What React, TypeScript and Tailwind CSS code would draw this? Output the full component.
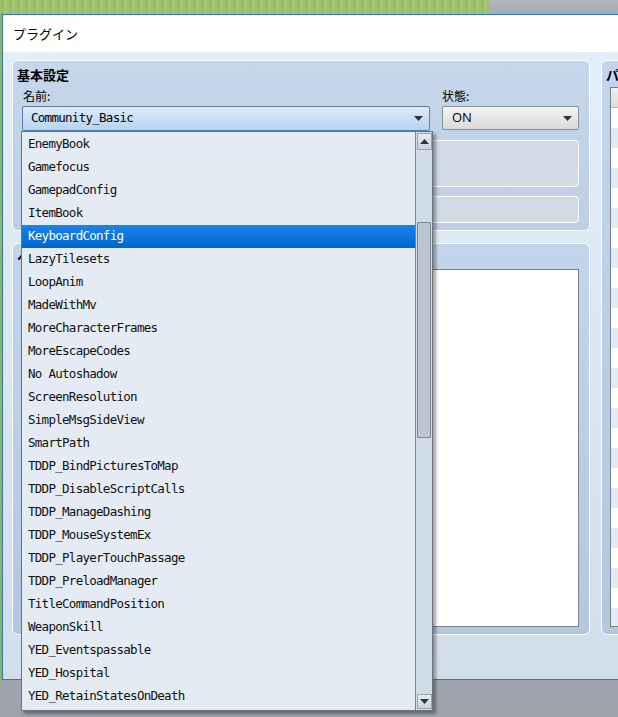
import React from "react";

const items = [
  "EnemyBook",
  "Gamefocus",
  "GamepadConfig",
  "ItemBook",
  "KeyboardConfig",
  "LazyTilesets",
  "LoopAnim",
  "MadeWithMv",
  "MoreCharacterFrames",
  "MoreEscapeCodes",
  "No Autoshadow",
  "ScreenResolution",
  "SimpleMsgSideView",
  "SmartPath",
  "TDDP_BindPicturesToMap",
  "TDDP_DisableScriptCalls",
  "TDDP_ManageDashing",
  "TDDP_MouseSystemEx",
  "TDDP_PlayerTouchPassage",
  "TDDP_PreloadManager",
  "TitleCommandPosition",
  "WeaponSkill",
  "YED_Eventspassable",
  "YED_Hospital",
  "YED_RetainStatesOnDeath",
];

const jp = "font-['Noto_Sans_CJK_JP','Noto_Sans',sans-serif]";
const mono = "font-['DejaVu_Sans_Mono',monospace] text-[12.5px] tracking-[-0.72px]";

function Arrow({ up = false }: { up?: boolean }) {
  return (
    <svg width="9" height="5" viewBox="0 0 9 5">
      {up ? <path d="M0 5 L4.5 0 L9 5 Z" fill="#333" /> : <path d="M0 0 L9 0 L4.5 5 Z" fill="#333" />}
    </svg>
  );
}

export default function App() {
  return (
    <div className="relative w-[618px] h-[717px] overflow-hidden bg-[linear-gradient(180deg,#a9aeb8,#9ea3ad)]">
      {/* top desktop strip */}
      <div className="flex h-[14px]">
        <div className="w-[490px] h-full bg-[repeating-linear-gradient(90deg,#a3c573_0px,#94b965_3px,#aacb7b_5px,#9bbf6b_8px)]" />
        <div className="flex-1 h-full bg-[linear-gradient(180deg,#b2b7c0,#a4a9b3)]" />
      </div>
      {/* left grass edge */}
      <div className="absolute left-0 top-[14px] w-[2px] h-[667px] bg-[#8fb35f]" />

      {/* window */}
      <div className="ml-[2px] w-[640px] h-[666px] border-l border-t border-b border-[#2b78d0] flex flex-col">
        <div className="h-[37px] bg-white flex items-center pl-[10px]">
          <span className={`${jp} text-[13px] text-black`}>プラグイン</span>
        </div>
        <div className="flex-1 bg-[linear-gradient(180deg,#e3eefb,#d2deea)] pt-[8px] pl-[9px] flex gap-[11px]">
          {/* left column */}
          <div className="w-[579px] flex flex-col gap-[12px]">
            {/* 基本設定 */}
            <div className="h-[171px] rounded-[6px] border border-white bg-[linear-gradient(180deg,#c6d7eb,#bccfe5)] pl-[9px] pr-[10px] flex flex-col">
              <div className={`${jp} text-[13px] font-bold text-black leading-none pt-[7px] -ml-[5px]`}>基本設定</div>
              <div className="flex gap-[12px] mt-[6px]">
                <div className="w-[408px] flex flex-col">
                  <div className={`${jp} text-[12px] text-black leading-none h-[18px] pt-[3px] pl-[1px]`}>名前:</div>
                  <div className="mt-[1px] h-[25px] rounded-[2px] border border-[#5d7ea6] bg-[linear-gradient(180deg,#dfeaf7,#b4d5f3)] flex items-center justify-between pl-[8px] pr-[6px]">
                    <span className={`${mono} text-black`}>Community_Basic</span>
                    <Arrow />
                  </div>
                </div>
                <div className="w-[137px] flex flex-col">
                  <div className={`${jp} text-[12px] text-black leading-none h-[18px] pt-[3px]`}>状態:</div>
                  <div className="mt-[1px] h-[24px] rounded-[2px] border border-[#8a8d92] bg-[linear-gradient(180deg,#f4f4f4,#d9dadc)] flex items-center justify-between pl-[9px] pr-[6px]">
                    <span className="font-['Open_Sans',sans-serif] text-[13px] text-black">ON</span>
                    <Arrow />
                  </div>
                </div>
              </div>
              <div className="mt-[9px] h-[47px] rounded-[4px] border border-white bg-[#d0dbe6]" />
              <div className="mt-[9px] h-[27px] rounded-[4px] border border-white bg-[#d0dbe6]" />
            </div>
            {/* ヘルプ */}
            <div className="h-[392px] rounded-[6px] border border-white bg-[linear-gradient(180deg,#c3d5ea,#b3c8de)] pl-[9px] pr-[10px] flex flex-col">
              <div className={`${jp} text-[13px] font-bold text-black leading-none pt-[6px] -ml-[5px]`}>ヘルプ</div>
              <div className="mt-[6px] h-[358px] bg-white border border-[#7a8089]" />
            </div>
          </div>
          {/* right column パラメータ */}
          <div className="w-[200px] h-[575px] rounded-[6px] border border-white bg-[linear-gradient(180deg,#c3d5ea,#b3c8de)] pl-[8px] flex flex-col">
            <div className={`${jp} text-[13px] font-bold text-black leading-none pt-[7px] -ml-[4px] whitespace-nowrap`}>パラメータ</div>
            <div className="mt-[6px] h-[540px] border border-[#7a8089] bg-white flex flex-col overflow-hidden">
              <div className="h-[20px] shrink-0 bg-[linear-gradient(180deg,#f0f0f0,#dcdcdc)] border-b border-[#b5b9be]" />
              {Array.from({ length: 26 }).map((_, i) => (
                <div key={i} className={`h-[20px] shrink-0 ${i % 2 === 1 ? "bg-[#e4eaf1]" : "bg-white"}`} />
              ))}
            </div>
          </div>
        </div>
      </div>

      {/* dropdown list */}
      <div className="absolute left-[21px] top-[131px] w-[412px] h-[580px] border border-[#6c737c] bg-[#e4ebf2] flex shadow-[3px_3px_3px_rgba(0,0,0,0.35)]">
        <div className="flex-1 flex flex-col pt-[1px]">
          {items.map((t, i) => (
            <div
              key={t}
              className={`h-[23px] shrink-0 flex items-center pl-[6px] ${mono} ${
                i === 4 ? "bg-[linear-gradient(180deg,#1a84ea,#0066cc)] text-white" : "text-[#111]"
              }`}
            >
              {t}
            </div>
          ))}
        </div>
        <div className="w-[17px] border-l border-[#7d8590] bg-[#d0dce6] flex flex-col items-center">
          <div className="w-[15px] h-[17px] mt-[1px] border border-[#9aa2ab] bg-[linear-gradient(180deg,#e6ecf2,#c8d2dc)] flex items-center justify-center">
            <Arrow up />
          </div>
          <div className="w-[14px] h-[216px] mt-[72px] border border-[#7d8590] bg-[#bcc6d0]" />
          <div className="flex-1" />
          <div className="w-[15px] h-[15px] mb-[1px] border border-[#9aa2ab] bg-[linear-gradient(180deg,#e6ecf2,#c8d2dc)] flex items-center justify-center">
            <Arrow />
          </div>
        </div>
      </div>
    </div>
  );
}
